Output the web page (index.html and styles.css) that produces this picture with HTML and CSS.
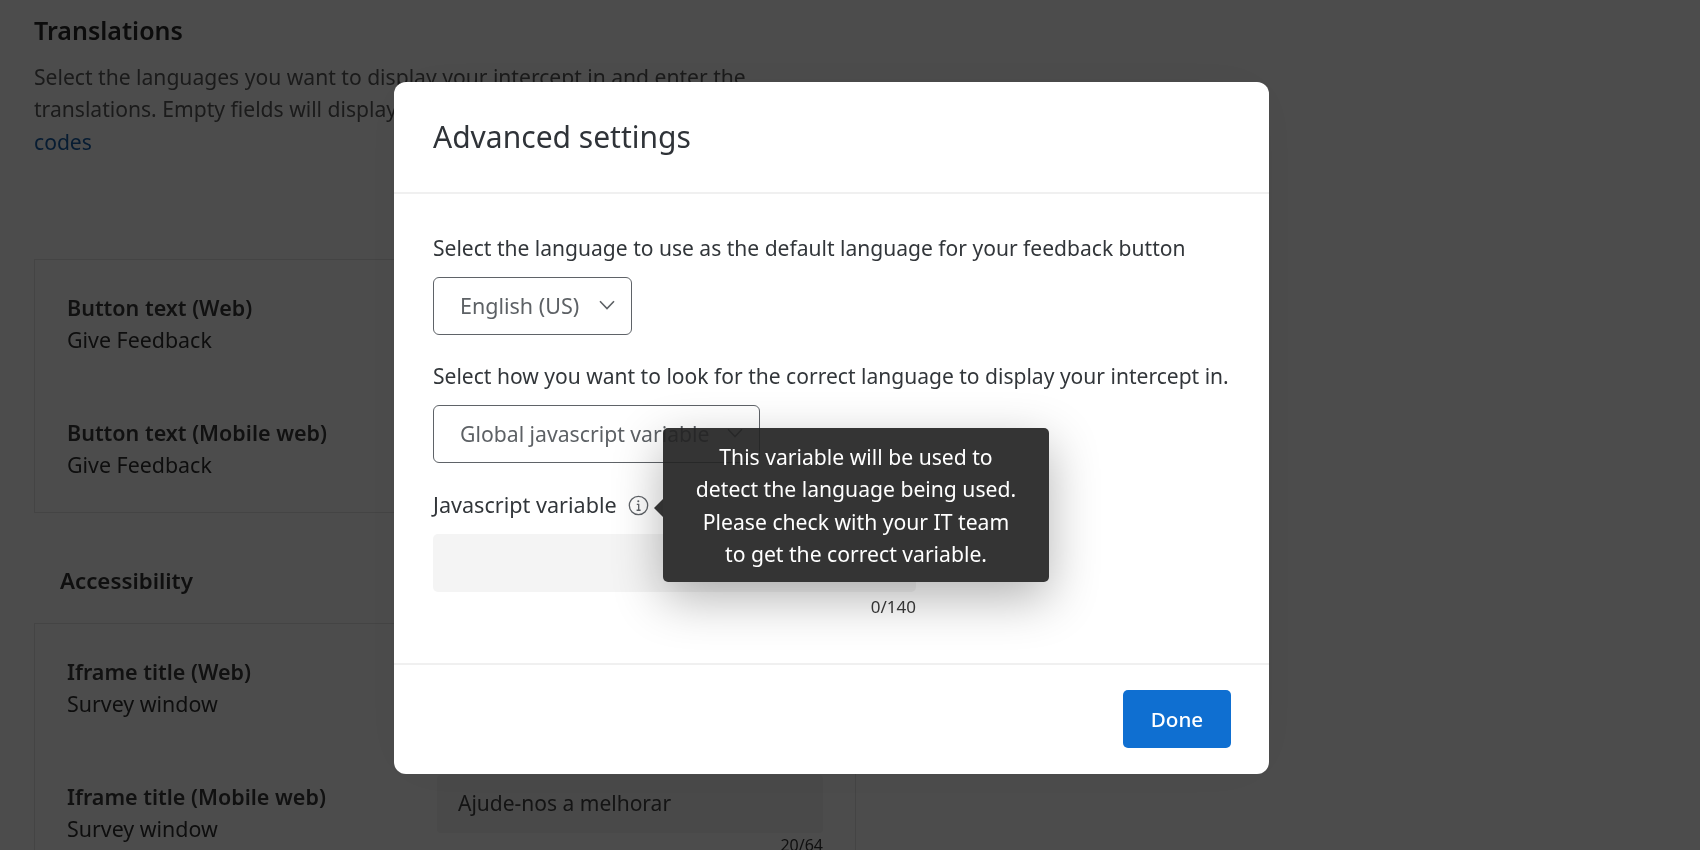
FILE: index.html
```html
<!DOCTYPE html>
<html lang="en">
<head>
<meta charset="utf-8">
<title>Advanced settings</title>
<link rel="stylesheet" href="styles.css">
</head>
<body>
<main class="page">
  <h2 class="page-title">Translations</h2>
  <p class="page-desc">Select the languages you want to display your intercept in and enter the<br>translations. Empty fields will display the default text. See language<br><a class="link" href="#">codes</a></p>
  <section class="card card-first">
    <div class="row"><div class="row-label"><b>Button text (Web)</b><span>Give Feedback</span></div></div>
    <div class="row"><div class="row-label"><b>Button text (Mobile web)</b><span>Give Feedback</span></div></div>
  </section>
  <h3 class="section-title">Accessibility</h3>
  <section class="card card-second">
    <div class="row"><div class="row-label"><b>Iframe title (Web)</b><span>Survey window</span></div></div>
    <div class="row">
      <div class="row-label"><b>Iframe title (Mobile web)</b><span>Survey window</span></div>
      <div class="bg-field"><div class="bg-input">Ajude-nos a melhorar</div><div class="bg-count">20/64</div></div>
    </div>
  </section>
</main>
<div class="overlay">
  <div class="modal">
    <header class="modal-head"><h1 class="modal-title">Advanced settings</h1></header>
    <div class="modal-body">
      <label class="label">Select the language to use as the default language for your feedback button</label>
      <div class="select select-lang"><span>English (US)</span><svg class="chev" viewBox="0 0 16 10"><path d="M1 1.2 8 8.5l7-7.3"/></svg></div>
      <label class="label label-second">Select how you want to look for the correct language to display your intercept in.</label>
      <div class="select select-method"><span>Global javascript variable</span><svg class="chev" viewBox="0 0 16 10"><path d="M1 1.2 8 8.5l7-7.3"/></svg></div>
      <div class="var-label">
        <span>Javascript variable</span>
        <svg class="info" viewBox="0 0 22 22"><circle cx="11" cy="11" r="9.6"/><circle class="dot" cx="10.8" cy="6.6" r="1.1"/><path d="M9.2 9.8h2v6.2M9 16h4.2"/></svg>
        <div class="tooltip">This variable will be used to<br>detect the language being used.<br>Please check with your IT team<br>to get the correct variable.</div>
      </div>
      <div class="text-input"></div>
      <div class="counter">0/140</div>
    </div>
    <footer class="modal-foot"><button class="done">Done</button></footer>
  </div>
</div>
</body>
</html>
```
FILE: styles.css
```css
* { box-sizing: border-box; }
html, body { margin: 0; height: 850px; overflow: hidden; }
body { background: #fff; font-family: "Noto Sans", "Open Sans", sans-serif; color: #32363a; }
.page { padding: 12px 0 0 34px; height: 850px; overflow: hidden; filter: blur(.5px); }
.page-title { margin: 0; font-size: 25px; line-height: 36px; font-weight: 600; color: #2b2b2b; }
.page-desc { margin: 13px 0 0; font-size: 21.1px; line-height: 32.4px; color: #5a5a5a; white-space: nowrap; }
.link { color: #1a5fa8; text-decoration: none; }
.card { width: 822px; border: 1px solid #e4e4e4; padding: 32px 32px 0; }
.card-first { margin-top: 101px; height: 254px; }
.card-second { height: 300px; }
.row { display: flex; height: 125px; position: relative; }
.row-label { display: flex; flex-direction: column; font-size: 21.5px; line-height: 32px; color: #2f2f2f; width: 372px; }
.row-label b { font-weight: 600; color: #3b3b3b; }
.row-label span { font-size: 21.4px; }
.section-title { margin: 51px 0 26px 26px; font-size: 22.3px; line-height: 33px; font-weight: 600; color: #333; }
.bg-input { width: 386px; height: 58px; margin-top: -6px; padding-left: 21px; background: #f4f4f4; border-radius: 4px; font-size: 21px; line-height: 56px; color: #444; }
.bg-count { font-size: 16px; line-height: 24px; text-align: right; color: #333; }
.overlay { position: fixed; inset: 0; background: rgba(0, 0, 0, .7); padding: 82px 0 0 394px; }
.modal { width: 875px; height: 692px; background: #fff; border-radius: 12px; display: flex; flex-direction: column; box-shadow: 0 0 60px rgba(0, 0, 0, .06); }
.modal-head { height: 112px; border-bottom: 2px solid #f0f0f0; padding: 0 39px; display: flex; align-items: center; }
.modal-title { margin: 0; font-size: 30px; line-height: 44px; font-weight: 400; color: #2f3338; }
.modal-body { flex: 1; padding: 38px 39px 0; }
.label { display: block; font-size: 21.05px; line-height: 32px; color: #32363a; white-space: nowrap; }
.label-second { margin-top: 25px; }
.select { margin-top: 13px; height: 58px; border: 1.5px solid #5f6368; border-radius: 6px; padding: 0 16px 2px 26px; display: flex; align-items: center; justify-content: space-between; font-size: 21.5px; color: #5d6165; background: #fff; }
.select-lang { width: 199px; }
.select-method { width: 327px; }
.select-method span { font-size: 21.2px; }
.chev { width: 16px; height: 10px; fill: none; stroke: #5d6165; stroke-width: 1.6; }
.var-label { margin-top: 26px; height: 32px; display: flex; align-items: center; gap: 11px; font-size: 21.6px; line-height: 32px; color: #32363a; position: relative; }
.info { width: 21px; height: 21px; fill: none; stroke: #5f6368; stroke-width: 1.4; }
.info .dot { fill: #5f6368; stroke: none; }
.tooltip { position: absolute; left: 230px; top: -61px; width: 386px; height: 154px; padding: 13px 0; background: rgba(35, 35, 35, .92); border-radius: 5px; color: #fff; text-align: center; font-size: 21.15px; line-height: 32.3px; box-shadow: 0 16px 50px rgba(0, 0, 0, .3); white-space: nowrap; z-index: 2; }
.tooltip::before { content: ""; position: absolute; left: -9px; top: 71px; border-style: solid; border-width: 9px 9px 9px 0; border-color: transparent rgba(35, 35, 35, .92) transparent transparent; }
.text-input { margin-top: 13px; width: 483px; height: 58px; background: #f4f4f4; border-radius: 5px; }
.counter { width: 483px; margin-top: 2px; text-align: right; font-size: 17px; line-height: 26px; color: #3a3a3a; }
.modal-foot { height: 111px; border-top: 2px solid #f0f0f0; padding: 25px 38px 0; display: flex; justify-content: flex-end; align-items: flex-start; }
.done { width: 108px; height: 58px; border: 0; border-radius: 5px; background: #0f6fd1; color: #fff; font: 500 20.6px "Noto Sans", sans-serif; }
```
